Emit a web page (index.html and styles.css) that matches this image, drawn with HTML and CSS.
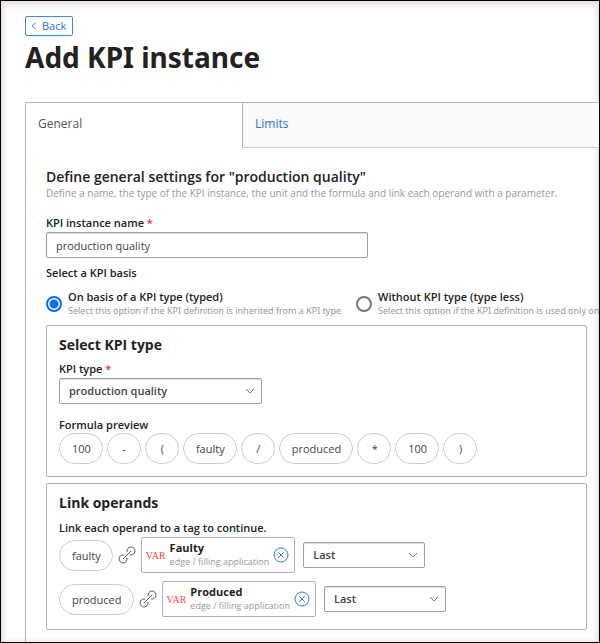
FILE: index.html
```html
<!DOCTYPE html>
<html lang="en">
<head>
<meta charset="utf-8">
<title>Add KPI instance</title>
<link rel="stylesheet" href="styles.css">
</head>
<body>
<svg class="defs" aria-hidden="true">
  <symbol id="chevron" viewBox="0 0 10 6"><path d="M1 1 L5 5 L9 1"/></symbol>
  <symbol id="link" viewBox="0 0 18 18"><path d="M9.1 6 A4 4 0 1 1 12 8.9 M8.9 12 A4 4 0 1 1 6 9.1 M5 13 L13 5"/></symbol>
  <symbol id="clear" viewBox="0 0 16 16"><circle cx="8" cy="8" r="7"/><path d="M5.3 5.3 L10.7 10.7 M10.7 5.3 L5.3 10.7"/></symbol>
</svg>
<main class="page">
  <button class="back" type="button">
    <svg class="back-icon" viewBox="0 0 6 8" aria-hidden="true"><path d="M4.5 .7 L1.2 4 L4.5 7.3"/></svg>Back
  </button>
  <h1>Add KPI instance</h1>

  <nav class="tabs">
    <a class="tab tab-active" href="#general">General</a>
    <a class="tab" href="#limits">Limits</a>
  </nav>

  <form class="panel" id="general">
    <h2>Define general settings for "production quality"</h2>
    <p class="hint">Define a name, the type of the KPI instance, the unit and the formula and link each operand with a parameter.</p>

    <label class="label" for="name">KPI instance name <span class="required">*</span></label>
    <input class="control name" id="name" type="text" value="production quality">

    <fieldset>
      <legend class="label">Select a KPI basis</legend>
      <div class="options">
        <label class="option">
          <input type="radio" name="basis" checked>
          <span class="option-text"><span class="option-title">On basis of a KPI type (typed)</span><span class="option-hint">Select this option if the KPI definition is inherited from a KPI type</span></span>
        </label>
        <label class="option">
          <input type="radio" name="basis">
          <span class="option-text"><span class="option-title">Without KPI type (type less)</span><span class="option-hint">Select this option if the KPI definition is used only on</span></span>
        </label>
      </div>
    </fieldset>

    <section class="card">
      <h3>Select KPI type</h3>
      <label class="label" for="type">KPI type <span class="required">*</span></label>
      <div class="select select-wide">
        <select class="control" id="type"><option>production quality</option></select>
        <svg class="chevron" aria-hidden="true"><use href="#chevron"/></svg>
      </div>
      <p class="label">Formula preview</p>
      <div class="pills">
        <span class="pill">100</span><span class="pill">-</span><span class="pill">(</span><span class="pill">faulty</span><span class="pill">/</span><span class="pill">produced</span><span class="pill">*</span><span class="pill">100</span><span class="pill">)</span>
      </div>
    </section>

    <section class="card card-operands">
      <h3>Link operands</h3>
      <p class="label">Link each operand to a tag to continue.</p>
      <div class="operand">
        <span class="pill">faulty</span>
        <svg class="link" aria-hidden="true"><use href="#link"/></svg>
        <div class="tag">
          <span class="var">VAR</span>
          <div class="tag-text"><span class="tag-name">Faulty</span><span class="tag-path">edge / filling application</span></div>
          <button class="clear" type="button" aria-label="Remove Faulty"><svg aria-hidden="true"><use href="#clear"/></svg></button>
        </div>
        <div class="select">
          <select class="control" aria-label="Aggregation for faulty"><option>Last</option></select>
          <svg class="chevron" aria-hidden="true"><use href="#chevron"/></svg>
        </div>
      </div>
      <div class="operand">
        <span class="pill">produced</span>
        <svg class="link" aria-hidden="true"><use href="#link"/></svg>
        <div class="tag">
          <span class="var">VAR</span>
          <div class="tag-text"><span class="tag-name">Produced</span><span class="tag-path">edge / filling application</span></div>
          <button class="clear" type="button" aria-label="Remove Produced"><svg aria-hidden="true"><use href="#clear"/></svg></button>
        </div>
        <div class="select">
          <select class="control" aria-label="Aggregation for produced"><option>Last</option></select>
          <svg class="chevron" aria-hidden="true"><use href="#chevron"/></svg>
        </div>
      </div>
    </section>
  </form>
</main>
</body>
</html>
```
FILE: styles.css
```css
* { box-sizing: border-box; }

body {
  margin: 0;
  background: #fff;
  color: #222;
  font: 11px/16px "Open Sans", "Noto Sans", sans-serif;
}

h1, h2, h3, p { margin: 0; }
button, input, select { font: inherit; color: inherit; }
svg { fill: none; stroke: currentColor; }
.defs { display: none; }

.page {
  display: flex;
  flex-direction: column;
  min-height: 100vh;
  padding: 15px 0 0 24px;
  border: 1px solid #000;
  box-shadow: inset 0 4px 6px #e6e0e4, inset 3px 0 5px #eee9ec, inset -2px 0 4px #e8e8e8;
  overflow: hidden;
}

.back {
  display: flex;
  align-items: center;
  align-self: flex-start;
  gap: 5px;
  height: 20px;
  padding: 0 6px 0 5px;
  border: 1px solid #3a87e8;
  border-radius: 2px;
  background: #fff;
  color: #1f74e0;
}
.back-icon { width: 6px; height: 8px; }

h1 {
  margin: 3px 0 27px;
  font-family: "Noto Sans", sans-serif;
  font-size: 28px;
  line-height: 36px;
  font-weight: 700;
}

.tabs {
  display: flex;
  border-top: 1px solid #b5b5b5;
  border-left: 1px solid #b5b5b5;
  border-top-left-radius: 2px;
}
.tab {
  flex: 1;
  padding: 13px 12px 15px;
  border-bottom: 1px solid #ccc;
  background: #fafafa;
  color: #2574e4;
  font-size: 12px;
  text-decoration: none;
}
.tab-active {
  flex: 0 0 217px;
  border-right: 1px solid #b5b5b5;
  border-bottom-color: #fff;
  background: #fff;
  color: #555;
}

.panel {
  flex: 1;
  padding: 20px 12px 12px 20px;
  border-left: 1px solid #b5b5b5;
}

h2 { font-size: 14px; line-height: 18px; font-weight: 600; }
h3 { margin-bottom: 6px; font-size: 14px; line-height: 20px; font-weight: 700; }
.hint { margin-bottom: 15px; color: #999; font-size: 10px; line-height: 14px; }
.label { display: block; padding: 0; font-weight: 600; }
.required { color: #f0284a; }

.control {
  display: block;
  width: 100%;
  height: 26px;
  margin: 0;
  padding: 0 9px;
  border: 1px solid #a0a0a0;
  border-radius: 2px;
  background: #fff;
  box-shadow: inset 0 1px 1px #ddd;
  color: #444;
}
.name { max-width: 322px; margin: 1px 0 7px; }

fieldset { min-width: 0; margin: 0; padding: 0; border: 0; }
.options { display: flex; gap: 15px; padding: 9px 0 7px; }
.option { display: flex; align-items: center; flex: none; gap: 6px; }
.option input {
  width: 16px;
  height: 16px;
  margin: 0;
  border: 2px solid #777;
  border-radius: 50%;
  appearance: none;
}
.option input:checked {
  border-color: #0a6cf5;
  background: radial-gradient(circle, #0a6cf5 4px, #fff 5px);
}
.option-text, .tag-text { display: flex; flex-direction: column; line-height: 14px; white-space: nowrap; }
.option-title { font-weight: 600; }
.option-hint { color: #999; font-family: "Noto Sans", sans-serif; font-size: 9px; }
.tag-path { color: #999; font-size: 9px; }

.card {
  padding: 9px 12px 12px;
  border: 1px solid #b0b0b0;
  border-radius: 2px;
}
.card-operands { margin-top: 6px; }
.card-operands .label { margin: 7px 0 1px; }

.select { display: grid; align-items: center; width: 122px; }
.select-wide { width: 203px; margin: 1px 0 13px; }
.select > * { grid-area: 1 / 1; }
.select select { appearance: none; font-weight: 600; }
.chevron { justify-self: end; width: 10px; height: 6px; margin-right: 7px; color: #777; pointer-events: none; }

.pills { display: flex; gap: 4px; }
.pill {
  min-width: 34px;
  padding: 8px 11px 7px 12px;
  border: 1px solid #ccc;
  border-radius: 16px;
  color: #444;
  line-height: 14px;
  text-align: center;
}

.operand { display: flex; align-items: center; }
.operand + .operand { margin-top: 8px; }
.link { width: 18px; height: 18px; margin: 0 5px; color: #555; }
.tag {
  display: flex;
  align-items: center;
  height: 36px;
  margin-right: 8px;
  padding: 0 5px 0 4px;
  border: 1px solid #b0b0b0;
  border-radius: 2px;
}
.tag-text { margin: 0 4px; }
.tag-name { font-weight: 700; }
.var { color: #ff4545; font: 10px "Liberation Serif", serif; }
.clear { display: flex; padding: 0; border: 0; background: none; color: #2f7de8; }
.clear svg { width: 16px; height: 16px; }
```
